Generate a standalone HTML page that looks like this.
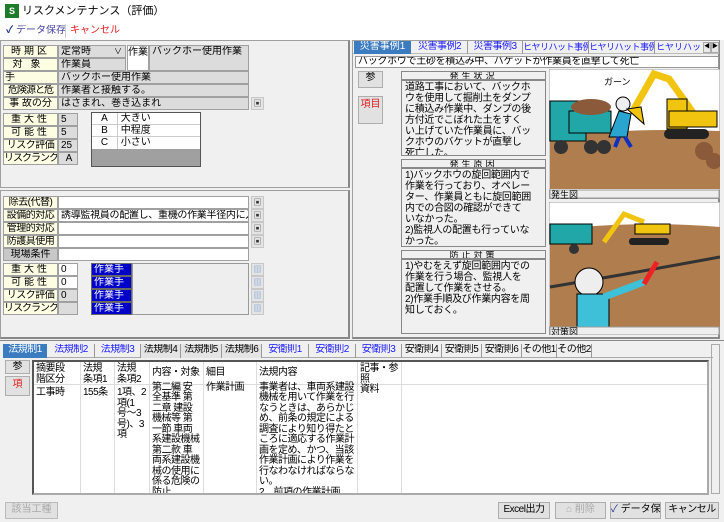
<!DOCTYPE html>
<html><head><meta charset="utf-8"><style>
*{box-sizing:border-box;margin:0;padding:0}
body{width:724px;height:522px;background:#f0f0f0;font-family:"Liberation Sans","Noto Sans CJK JP",sans-serif;font-size:10px;color:#000;position:relative;overflow:hidden}
.a{position:absolute;white-space:nowrap;overflow:hidden;line-height:12px}
.lb{background:#fdfde4;border:1px solid #a0a0a0;text-align:center}
.fd{background:#dcdcdc;border:1px solid #a0a0a0;padding-left:2px}
.wf{background:#fff;border:1px solid #a0a0a0;padding-left:2px}
.ic{background:#e4e4e4;border:1px solid #c8c8c8;font-size:8px;text-align:center;color:#333}
.pn{border:1px solid #a0a0a0}
.bt{background:#e1e1e1;border:1px solid #adadad;text-align:center;line-height:14px}
.tb{color:#1a1aff;text-align:center;border-right:1px solid #999;letter-spacing:-0.5px}
.tg{color:#000;text-align:center;border-right:1px solid #999;letter-spacing:-0.5px}
.bl{background:#0000c8;color:#fff;border:1px solid #666;padding-left:2px}
.txt{background:#f0f0f0;border:1px solid #888;white-space:normal;line-height:11px;padding:1px 3px;font-size:10px;letter-spacing:-0.3px}
.hd{background:#f0f0f0;border:1px solid #888;text-align:center;letter-spacing:3px;line-height:8px;font-size:9px}
.col{position:absolute;top:0;bottom:0;border-right:1px solid #ddd;padding:2px 2px;white-space:normal;line-height:10.5px;letter-spacing:-0.5px;overflow:hidden}
.sp{letter-spacing:3px}
</style></head><body>
<div class="a" style="left:0;top:0;width:724px;height:22px;background:#fff"></div>
<div class="a" style="left:5px;top:4px;width:14px;height:14px;background:#1d7b2a;color:#fff;font-size:9px;line-height:14px;text-align:center;font-weight:bold">S</div>
<div class="a" style="left:22px;top:5px;font-size:11px;line-height:13px">リスクメンテナンス（評価）</div>
<div class="a" style="left:0;top:22px;width:724px;height:18px;background:#fff"></div>
<div class="a" style="left:6px;top:25px;"><span style="color:#1a2f8a;font-weight:bold">✓</span> <span style="color:#4646a0">データ保存</span></div>
<div class="a" style="left:65px;top:24px;width:1px;height:14px;background:#ccc"></div>
<div class="a" style="left:70px;top:25px;color:#e02020">キャンセル</div>

<div class="a pn" style="left:0;top:40px;width:350px;height:148px;border-right:2px solid #888"></div>
<div class="a lb sp" style="left:3px;top:45px;width:55px;height:13px">時期区</div>
<div class="a fd" style="left:58px;top:45px;width:68px;height:13px">定常時 <span style="float:right;font-size:8px;margin-right:3px">∨</span></div>
<div class="a lb" style="left:3px;top:58px;width:55px;height:13px;letter-spacing:8px">対象</div>
<div class="a fd" style="left:58px;top:58px;width:68px;height:13px">作業員</div>
<div class="a" style="left:127px;top:45px;width:22px;height:26px;background:#fff;border:1px solid #a0a0a0;white-space:normal;text-align:center;line-height:11px;padding-top:1px">作業</div>
<div class="a fd" style="left:149px;top:45px;width:100px;height:26px">バックホー使用作業</div>
<div class="a lb" style="left:3px;top:71px;width:55px;height:13px;text-align:left;padding-left:1px">手</div>
<div class="a fd" style="left:58px;top:71px;width:191px;height:13px">バックホー使用作業</div>
<div class="a lb" style="left:3px;top:84px;width:55px;height:13px;letter-spacing:-1px">危険源と危</div>
<div class="a fd" style="left:58px;top:84px;width:191px;height:13px">作業者と接触する。</div>
<div class="a lb" style="left:3px;top:97px;width:55px;height:13px">事 故の分</div>
<div class="a fd" style="left:58px;top:97px;width:191px;height:13px">はさまれ、巻き込まれ</div>
<div class="a ic" style="left:251px;top:97px;width:13px;height:13px">▣</div>

<div class="a lb sp" style="left:3px;top:113px;width:55px;height:13px">重大性</div>
<div class="a fd" style="left:58px;top:113px;width:20px;height:13px">5</div>
<div class="a lb sp" style="left:3px;top:126px;width:55px;height:13px">可能性</div>
<div class="a fd" style="left:58px;top:126px;width:20px;height:13px">5</div>
<div class="a lb" style="left:3px;top:139px;width:55px;height:13px;letter-spacing:-0.5px">リスク評価</div>
<div class="a fd" style="left:58px;top:139px;width:20px;height:13px">25</div>
<div class="a lb" style="left:3px;top:152px;width:55px;height:13px;letter-spacing:-1px">リスクランク</div>
<div class="a fd" style="left:58px;top:152px;width:20px;height:13px;text-align:center">A</div>
<div class="a" style="left:91px;top:112px;width:110px;height:55px;background:#a0a0a0;border:1px solid #555"></div>
<div class="a" style="left:92px;top:113px;width:108px;height:36px;background:#fff"></div>
<div class="a" style="left:92px;top:113px;width:108px;line-height:12px">
<div style="border-bottom:1px solid #ccc;height:12px"><span style="display:inline-block;width:26px;text-align:center;border-right:1px solid #ccc">A</span> 大きい</div>
<div style="border-bottom:1px solid #ccc;height:12px"><span style="display:inline-block;width:26px;text-align:center;border-right:1px solid #ccc">B</span> 中程度</div>
<div style="height:12px"><span style="display:inline-block;width:26px;text-align:center;border-right:1px solid #ccc">C</span> 小さい</div></div>

<div class="a pn" style="left:0;top:190px;width:350px;height:149px;border-right:2px solid #888;border-bottom:2px solid #888"></div>
<div class="a lb" style="left:3px;top:196px;width:55px;height:13px;letter-spacing:-0.5px">除去(代替)</div>
<div class="a wf" style="left:58px;top:196px;width:191px;height:13px"></div>
<div class="a lb" style="left:3px;top:209px;width:55px;height:13px;letter-spacing:-0.5px">設備的対応</div>
<div class="a wf" style="left:58px;top:209px;width:191px;height:13px;letter-spacing:-0.3px">誘導監視員の配置し、重機の作業半径内に入ら</div>
<div class="a lb" style="left:3px;top:222px;width:55px;height:13px;letter-spacing:-0.5px">管理的対応</div>
<div class="a wf" style="left:58px;top:222px;width:191px;height:13px"></div>
<div class="a lb" style="left:3px;top:235px;width:55px;height:13px;letter-spacing:-0.5px">防護具使用</div>
<div class="a wf" style="left:58px;top:235px;width:191px;height:13px"></div>
<div class="a" style="left:3px;top:248px;width:55px;height:13px;background:#c8c8c8;border:1px solid #a0a0a0;text-align:center">現場条件</div>
<div class="a wf" style="left:58px;top:248px;width:191px;height:13px"></div>
<div class="a ic" style="left:251px;top:196px;width:13px;height:13px">▣</div>
<div class="a ic" style="left:251px;top:209px;width:13px;height:13px">▣</div>
<div class="a ic" style="left:251px;top:222px;width:13px;height:13px">▣</div>
<div class="a ic" style="left:251px;top:235px;width:13px;height:13px">▣</div>

<div class="a lb sp" style="left:3px;top:263px;width:55px;height:13px">重大性</div>
<div class="a wf" style="left:58px;top:263px;width:20px;height:13px">0</div>
<div class="a lb sp" style="left:3px;top:276px;width:55px;height:13px">可能性</div>
<div class="a wf" style="left:58px;top:276px;width:20px;height:13px">0</div>
<div class="a lb" style="left:3px;top:289px;width:55px;height:13px;letter-spacing:-0.5px">リスク評価</div>
<div class="a fd" style="left:58px;top:289px;width:20px;height:13px">0</div>
<div class="a lb" style="left:3px;top:302px;width:55px;height:13px;letter-spacing:-1px">リスクランク</div>
<div class="a fd" style="left:58px;top:302px;width:20px;height:13px"></div>
<div class="a bl" style="left:91px;top:263px;width:41px;height:13px">作業手</div>
<div class="a bl" style="left:91px;top:276px;width:41px;height:13px">作業手</div>
<div class="a bl" style="left:91px;top:289px;width:41px;height:13px">作業手</div>
<div class="a bl" style="left:91px;top:302px;width:41px;height:13px">作業手</div>
<div class="a" style="left:132px;top:263px;width:117px;height:52px;background:#eee;border:1px solid #999"></div>
<div class="a ic" style="left:251px;top:263px;width:13px;height:13px;color:#5a8fd0">▥</div>
<div class="a ic" style="left:251px;top:276px;width:13px;height:13px;color:#5a8fd0">▥</div>
<div class="a ic" style="left:251px;top:289px;width:13px;height:13px;color:#5a8fd0">▥</div>
<div class="a ic" style="left:251px;top:302px;width:13px;height:13px;color:#5a8fd0">▥</div>

<div class="a pn" style="left:352px;top:40px;width:368px;height:299px;border-bottom:2px solid #888;border-right:2px solid #888"></div>
<div class="a" style="left:353px;top:41px;width:366px;height:13px;background:#f0f0f0;border-bottom:1px solid #bbb"></div>
<div class="a" style="left:354px;top:41px;width:57px;height:13px;background:#3b7bc0;color:#fff;text-align:center">災害事例1</div>
<div class="a tb" style="left:412px;top:41px;width:56px;height:13px">災害事例2</div>
<div class="a tb" style="left:468px;top:41px;width:55px;height:13px">災害事例3</div>
<div class="a tb" style="left:523px;top:41px;width:66px;height:13px;font-size:9px">ヒヤリハット事例1</div>
<div class="a tb" style="left:589px;top:41px;width:66px;height:13px;font-size:9px">ヒヤリハット事例2</div>
<div class="a" style="left:656px;top:41px;width:47px;height:13px;color:#1a1aff;font-size:9px">ヒヤリハット事</div>
<div class="a" style="left:703px;top:42px;width:8px;height:11px;background:#e8e8e8;border:1px solid #aaa;font-size:6px;text-align:center;line-height:9px">◀</div>
<div class="a" style="left:711px;top:42px;width:8px;height:11px;background:#e8e8e8;border:1px solid #aaa;font-size:6px;text-align:center;line-height:9px">▶</div>
<div class="a" style="left:355px;top:56px;width:364px;height:12px;background:#fff;border:1px solid #999;padding-left:2px;line-height:10px;letter-spacing:-0.3px">バックホウで土砂を積込み中、バケットが作業員を直撃して死亡</div>
<div class="a bt" style="left:358px;top:71px;width:25px;height:17px;line-height:12px">参</div>
<div class="a bt" style="left:358px;top:96px;width:25px;height:28px;color:#e02020;white-space:normal;line-height:11px;padding-top:2px">項目</div>
<div class="a hd" style="left:401px;top:71px;width:145px;height:9px">発生状況</div>
<div class="a txt" style="left:401px;top:80px;width:145px;height:76px;padding-right:14px">道路工事において、バックホウを使用して掘削土をダンプに積込み作業中、ダンプの後方付近でこぼれた土をすくい上げていた作業員に、バックホウのバケットが直撃し死亡した。</div>
<div class="a hd" style="left:401px;top:159px;width:145px;height:9px">発生原因</div>
<div class="a txt" style="left:401px;top:168px;width:145px;height:79px;padding-right:14px">1)バックホウの旋回範囲内で作業を行っており、オペレーター、作業員ともに旋回範囲内での合図の確認ができていなかった。<br>2)監視人の配置も行っていなかった。</div>
<div class="a hd" style="left:401px;top:250px;width:145px;height:9px">防止対策</div>
<div class="a txt" style="left:401px;top:259px;width:145px;height:75px;padding-right:14px">1)やむをえず旋回範囲内での作業を行う場合、監視人を配置して作業をさせる。<br>2)作業手順及び作業内容を周知しておく。</div>

<svg class="a" style="left:549px;top:69px" width="171" height="130" viewBox="0 0 171 130">
<rect x="0" y="0" width="171" height="130" fill="#fff" stroke="#999"/>
<path d="M1 70 Q60 58 171 62 L171 120 L1 120Z" fill="#b07d4f"/>
<rect x="1" y="32" width="36" height="40" fill="#22a7a8" stroke="#000"/>
<rect x="20" y="42" width="42" height="22" fill="#22a7a8" stroke="#000"/>
<ellipse cx="42" cy="38" rx="20" ry="8" fill="#8a5a3a"/>
<circle cx="12" cy="78" r="7" fill="#333"/><circle cx="42" cy="78" r="7" fill="#333"/><circle cx="55" cy="78" r="7" fill="#333"/>
<path d="M60 68 L70 42 L82 45 L78 68Z" fill="#2aa5d0" stroke="#000"/>
<circle cx="74" cy="35" r="7" fill="#eee" stroke="#000"/>
<path d="M70 68 L66 78 M76 68 L82 78" stroke="#1030c0" stroke-width="4"/>
<path d="M85 40 L105 5 L120 10 L145 45" stroke="#f1c40f" stroke-width="7" fill="none"/>
<path d="M78 40 L92 38 L95 55 Z" fill="#f1c40f" stroke="#000"/>
<rect x="118" y="30" width="20" height="30" fill="#f1c40f" stroke="#000"/>
<rect x="120" y="42" width="48" height="16" fill="#f1c40f" stroke="#000"/>
<rect x="115" y="60" width="45" height="10" rx="5" fill="#222"/>
<circle cx="155" cy="82" r="9" fill="#8a5a3a"/><circle cx="165" cy="92" r="8" fill="#8a5a3a"/>
<text x="55" y="16" font-size="9" font-family="Liberation Sans,Noto Sans CJK JP,sans-serif">ガーン</text>
<rect x="1" y="121" width="169" height="8" fill="#eee" stroke="#999"/>
<text x="2" y="129" font-size="9" font-family="Liberation Sans,Noto Sans CJK JP,sans-serif">発生図</text>
</svg>
<svg class="a" style="left:549px;top:202px" width="171" height="133" viewBox="0 0 171 133">
<rect x="0" y="0" width="171" height="133" fill="#fff" stroke="#999"/>
<path d="M1 28 Q90 18 171 25 L171 125 L1 125Z" fill="#b07d4f"/>
<path d="M1 85 Q90 70 171 55" stroke="#333" stroke-width="3" fill="none"/>
<rect x="1" y="22" width="42" height="20" fill="#22a7a8" stroke="#000"/>
<circle cx="25" cy="47" r="5" fill="#333"/>
<path d="M55 40 L75 12 L95 20" stroke="#f1c40f" stroke-width="5" fill="none"/>
<rect x="86" y="22" width="35" height="10" fill="#f1c40f" stroke="#000"/>
<rect x="80" y="36" width="40" height="7" rx="3" fill="#222"/>
<circle cx="40" cy="80" r="14" fill="#eee" stroke="#000"/>
<path d="M28 92 L60 92 L60 125 L28 125Z" fill="#3ec1d8" stroke="#000"/>
<path d="M55 95 L95 80" stroke="#3ec1d8" stroke-width="7"/>
<path d="M95 82 L108 60" stroke="#e22" stroke-width="5"/>
<rect x="1" y="125" width="169" height="8" fill="#eee" stroke="#999"/>
<text x="2" y="133" font-size="9" font-family="Liberation Sans,Noto Sans CJK JP,sans-serif">対策図</text>
</svg>

<div class="a" style="left:0;top:340px;width:724px;height:1px;background:#888"></div>
<div class="a" style="left:3px;top:344px;width:710px;height:14px;border-bottom:1px solid #aaa"></div>
<div class="a" style="left:3px;top:344px;width:44px;height:14px;background:#3b7bc0;color:#fff;text-align:center;letter-spacing:-0.5px">法規制1</div>
<div class="a tb" style="left:48px;top:344px;width:47px;height:14px">法規制2</div>
<div class="a tb" style="left:95px;top:344px;width:46px;height:14px">法規制3</div>
<div class="a tg" style="left:141px;top:344px;width:40px;height:14px;background:#e4e4e4">法規制4</div>
<div class="a tg" style="left:181px;top:344px;width:41px;height:14px;background:#e4e4e4">法規制5</div>
<div class="a tg" style="left:222px;top:344px;width:40px;height:14px;background:#e4e4e4">法規制6</div>
<div class="a tb" style="left:262px;top:344px;width:47px;height:14px">安衛則1</div>
<div class="a tb" style="left:309px;top:344px;width:47px;height:14px">安衛則2</div>
<div class="a tb" style="left:356px;top:344px;width:46px;height:14px">安衛則3</div>
<div class="a tg" style="left:402px;top:344px;width:40px;height:14px">安衛則4</div>
<div class="a tg" style="left:442px;top:344px;width:40px;height:14px">安衛則5</div>
<div class="a tg" style="left:482px;top:344px;width:40px;height:14px">安衛則6</div>
<div class="a tg" style="left:522px;top:344px;width:35px;height:14px">その他1</div>
<div class="a tg" style="left:557px;top:344px;width:35px;height:14px">その他2</div>
<div class="a" style="left:711px;top:344px;width:9px;height:150px;border:1px solid #aaa"></div>
<div class="a bt" style="left:5px;top:360px;width:25px;height:14px;line-height:12px">参</div>
<div class="a bt" style="left:5px;top:376px;width:25px;height:20px;color:#e02020;line-height:16px">項</div>
<div class="a" style="left:32px;top:360px;width:677px;height:135px;background:#fff;border:2px solid #555;border-right-color:#aaa;border-bottom-color:#aaa;overflow:hidden">
<div style="position:absolute;left:0;top:22px;width:100%;height:1px;background:#ddd"></div>
<div class="col" style="left:0;width:47px">摘要段<br>階区分<div style="margin-top:3px">工事時</div></div>
<div class="col" style="left:47px;width:34px">法規<br>条項1<div style="margin-top:3px">155条</div></div>
<div class="col" style="left:81px;width:35px">法規<br>条項2<div style="margin-top:3px">1項、2<br>項(1<br>号〜3<br>号)、3<br>項</div></div>
<div class="col" style="left:116px;width:54px;padding-top:6px">内容・対象<div style="margin-top:4px">第二編 安全基準 第二章 建設機械等 第一節 車両系建設機械 第二款 車両系建設機械の使用に係る危険の防止</div></div>
<div class="col" style="left:170px;width:53px;padding-top:6px">細目<div style="margin-top:4px">作業計画</div></div>
<div class="col" style="left:223px;width:101px;padding-top:6px">法規内容<div style="margin-top:4px">事業者は、車両系建設機械を用いて作業を行なうときは、あらかじめ、前条の規定による調査により知り得たところに適応する作業計画を定め、かつ、当該作業計画により作業を行なわなければならない。<br>2　前項の作業計画は、次の事項が示されているものでなければならない</div></div>
<div class="col" style="left:324px;width:44px">記事・参照<br>資料</div>
</div>

<div class="a bt" style="left:5px;top:502px;width:53px;height:17px;color:#aaa;border-color:#bbb">該当工種</div>
<div class="a bt" style="left:498px;top:502px;width:52px;height:17px;letter-spacing:-0.5px">Excel出力</div>
<div class="a bt" style="left:555px;top:502px;width:51px;height:17px;color:#aaa">⌂ 削除</div>
<div class="a bt" style="left:610px;top:502px;width:51px;height:17px"><span style="color:#1a2f8a">✓</span> データ保</div>
<div class="a bt" style="left:665px;top:502px;width:54px;height:17px;letter-spacing:-0.5px">キャンセル</div>
</body></html>
